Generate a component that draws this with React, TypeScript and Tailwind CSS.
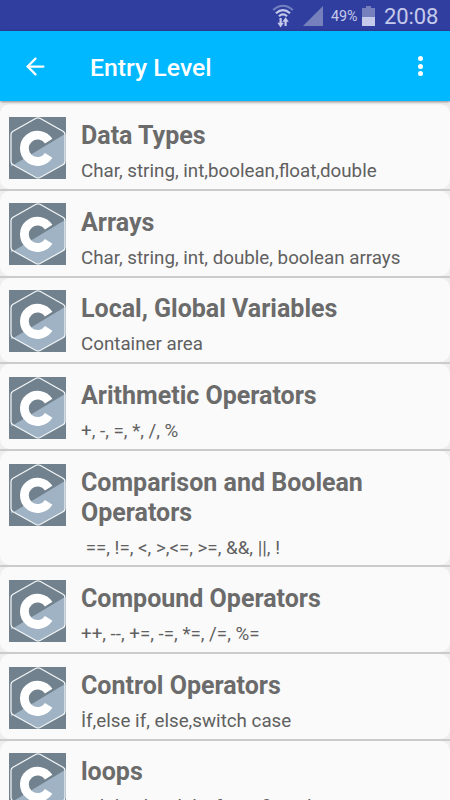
import { ArrowLeft } from 'lucide-react';

const topics = [
  { title: 'Data Types', detail: 'Char, string, int,boolean,float,double' },
  { title: 'Arrays', detail: 'Char, string, int, double, boolean arrays' },
  { title: 'Local, Global Variables', detail: 'Container area' },
  { title: 'Arithmetic Operators', detail: '+, -, =, *, /, %' },
  { title: 'Comparison and Boolean Operators', detail: ' ==, !=, <, >,<=, >=, &&, ||, !' },
  { title: 'Compound Operators', detail: '++, --, +=, -=, *=, /=, %=' },
  { title: 'Control Operators', detail: 'İf,else if, else,switch case' },
  { title: 'loops', detail: ' while, do while, for, infinite loop' },
];

function StatusBar() {
  return (
    <div className="flex h-[31px] shrink-0 items-center justify-end bg-[#303f9f] pr-[12px] text-[#c5caeb]">
      <svg className="mr-[9px] h-[24px] w-[22px]" viewBox="0 0 22 24" fill="none" stroke="currentColor" strokeWidth="2">
        <path d="M1.2 6Q11-2.4 20.8 6" stroke="#7580c0" />
        <path d="M4 9.2Q11 3 18 9.2M7 12.2Q11 8.6 15 12.2" strokeWidth="2.2" />
        <path d="M8.6 14v6M13.6 22v-6" strokeWidth="2.2" />
        <path d="M5.4 18.8h6.4l-3.2 4.6zM10.4 17.7h6.4l-3.2-4.4z" fill="currentColor" stroke="none" />
      </svg>
      <svg className="mr-[8px] h-[20px] w-[20px]" viewBox="0 0 20 20">
        <path d="M20 0v20H0z" fill="#7580bd" />
      </svg>
      <span className="w-[27px] pt-[2px] text-[14.3px] leading-none">49%</span>
      <svg className="mr-[9px] ml-[4px] h-[20px] w-[13px]" viewBox="0 0 13 20">
        <path d="M4 0h5v2h4v9H0V2h4z" fill="#7580bd" />
        <path d="M0 11h13v9H0z" fill="#c5caeb" />
      </svg>
      <span className="w-[54px] pt-[2px] text-[22px] leading-none tracking-[-0.1px]">20:08</span>
    </div>
  );
}

function Toolbar() {
  return (
    <header className="relative flex h-[70px] shrink-0 items-center bg-[#00b8ff] pr-[27px] pl-[22px] text-white shadow-[0_1px_3px_rgba(0,0,0,0.5)]">
      <ArrowLeft className="h-[27px] w-[27px]" strokeWidth={2} />
      <h1 className="ml-[41px] flex-1 pt-[4px] text-[24.8px] leading-none font-medium">Entry Level</h1>
      <div className="flex flex-col gap-[2.5px]">
        <span className="size-[5px] rounded-full bg-white" />
        <span className="size-[5px] rounded-full bg-white" />
        <span className="size-[5px] rounded-full bg-white" />
      </div>
    </header>
  );
}

function CLogo() {
  return (
    <svg className="mt-[12.5px] h-[62px] w-[57px] shrink-0" viewBox="0 0 57 62">
      <path d="M0 0h57v62H0z" fill="#71828e" />
      <path d="M2 49.5 56 17v30L29 61 2 47z" fill="#a0b3c4" />
      <path d="M27 1.3Q29 .3 31 1.3L54 14.2Q56 15.3 56 17.5v27q0 2.2-2 3.3L31 60.5q-2 1-4 0L4 47.8q-2-1.1-2-3.3v-27q0-2.2 2-3.3z" fill="none" stroke="#f4f7f8" strokeWidth="1.2" />
      <path d="M39.7 24.2A13.2 13.2 0 1 0 39.7 38.4" fill="none" stroke="#fff" strokeWidth="8.8" />
    </svg>
  );
}

export default function App() {
  return (
    <div className="flex h-[800px] w-[450px] flex-col overflow-hidden bg-[#fafafa] font-[Roboto,sans-serif]">
      <StatusBar />
      <Toolbar />
      <main className="flex flex-col pt-[3.3px]">
        {topics.map((topic) => (
          <div key={topic.title} className="shrink-0 border-b-2 border-[#cbcbcb] bg-[#eeeeee]">
            <div className="flex min-h-[84.7px] items-start rounded-[10px] bg-[#fafafa] pl-[9px]">
              <CLogo />
              <div className="ml-[15px] w-[330px] pt-[16.7px] pb-[5.7px]">
                <h2 className="text-[25px] leading-[30px] font-bold text-[#6b6b6b]">{topic.title}</h2>
                <p className="mt-[7.9px] text-[18.75px] leading-[24px] whitespace-pre text-[#606060]">{topic.detail}</p>
              </div>
            </div>
          </div>
        ))}
      </main>
    </div>
  );
}
